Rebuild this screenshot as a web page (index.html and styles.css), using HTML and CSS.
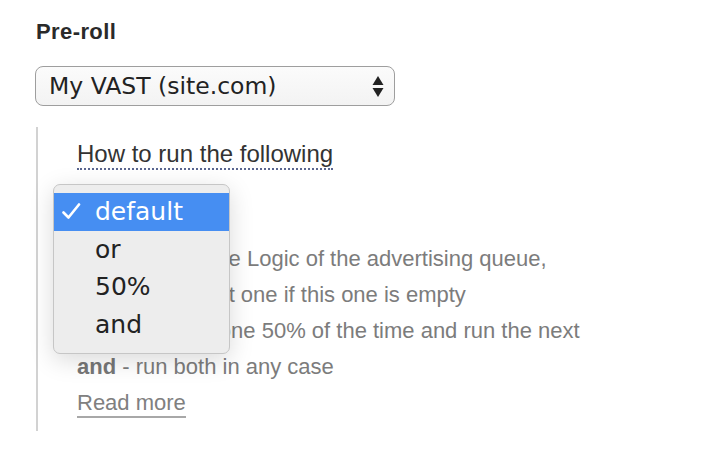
FILE: index.html
```html
<!DOCTYPE html>
<html>
<head>
<meta charset="utf-8">
<link rel="stylesheet" href="styles.css">
</head>
<body>
<div class="field">
  <div class="field-label">Pre-roll</div>
  <div class="select">
    <span class="select-value">My VAST (site.com)</span>
    <svg class="select-arrows" width="12" height="24" viewBox="0 0 12 24">
      <path d="M6 2 L11.5 11 L0.5 11 Z" fill="#222"/>
      <path d="M0.5 14 L11.5 14 L6 23 Z" fill="#222"/>
    </svg>
  </div>
  <div class="options">
    <div class="options-title"><span class="hint">How to run the following</span></div>
    <div class="mode-row">
      <div class="popup">
        <div class="popup-item selected">
          <svg class="check" width="19" height="17" viewBox="0 0 19 17"><path d="M1.5 9.5 L6.5 14.5 L17 1.5" fill="none" stroke="#fff" stroke-width="2.6" stroke-linecap="round" stroke-linejoin="round"/></svg>
          <span>default</span>
        </div>
        <div class="popup-item"><span>or</span></div>
        <div class="popup-item"><span>50%</span></div>
        <div class="popup-item"><span>and</span></div>
      </div>
    </div>
    <div class="desc">
      <div><b>default</b> - use the Logic of the advertising queue,</div>
      <div><b>or</b> - run the next one if this one is empty</div>
      <div><b>50%</b> - run this one 50% of the time and run the next</div>
      <div><b>and</b> - run both in any case</div>
      <div><a class="more" href="#">Read more</a></div>
    </div>
  </div>
</div>
</body>
</html>
```
FILE: styles.css
```css
html, body {
  margin: 0;
  padding: 0;
  background: #fff;
}
body {
  font-family: "Liberation Sans", Arial, sans-serif;
  color: #333;
}
.field {
  padding: 19px 0 0 36px;
}
.field-label {
  font-size: 22px;
  line-height: 26px;
  font-weight: bold;
  letter-spacing: 0.4px;
  color: #2a2a2a;
}
.select {
  margin: 21px 0 0 -1px;
  height: 38px;
  width: 335px;
  border: 1px solid #9e9e9e;
  border-radius: 8px;
  background: linear-gradient(#fbfbfb, #f3f3f3);
  display: flex;
  align-items: center;
  justify-content: space-between;
  padding: 0 10px 0 13px;
  box-sizing: content-box;
}
.select-value {
  font-family: "DejaVu Sans", Verdana, sans-serif;
  font-size: 23.5px;
  color: #222;
}
.select-arrows {
  display: block;
}
.options {
  margin-top: 21px;
  border-left: 2px solid #d2d2d2;
  padding: 13px 0 10px 39px;
}
.options-title {
  font-size: 24px;
  line-height: 28px;
  height: 28px;
}
.hint {
  color: #333;
  border-bottom: 2px dotted #5a6690;
  padding-bottom: 1px;
}
.mode-row {
  position: relative;
  height: 73px;
}
.popup {
  position: absolute;
  left: -24px;
  top: 16px;
  width: 175px;
  padding: 8px 0 10px;
  background: #ededed;
  border: 1px solid #c6c6c6;
  border-radius: 7px;
  box-shadow: 0 6px 24px rgba(0, 0, 0, 0.15);
  z-index: 2;
}
.popup-item {
  height: 37.5px;
  display: flex;
  align-items: center;
  padding-left: 41px;
  position: relative;
  font-family: "DejaVu Sans", Verdana, sans-serif;
  font-size: 25px;
  color: #222;
}
.popup-item.selected {
  background: #468ef2;
  color: #fff;
}
.check {
  position: absolute;
  left: 8px;
  top: 10px;
}
.desc {
  font-size: 22px;
  line-height: 36px;
  color: #7c7c7c;
  white-space: nowrap;
}
.desc b {
  color: #777;
}
.more {
  color: #808080;
  text-decoration: none;
  border-bottom: 2px solid #a8a8a8;
  padding-bottom: 1px;
}
```
